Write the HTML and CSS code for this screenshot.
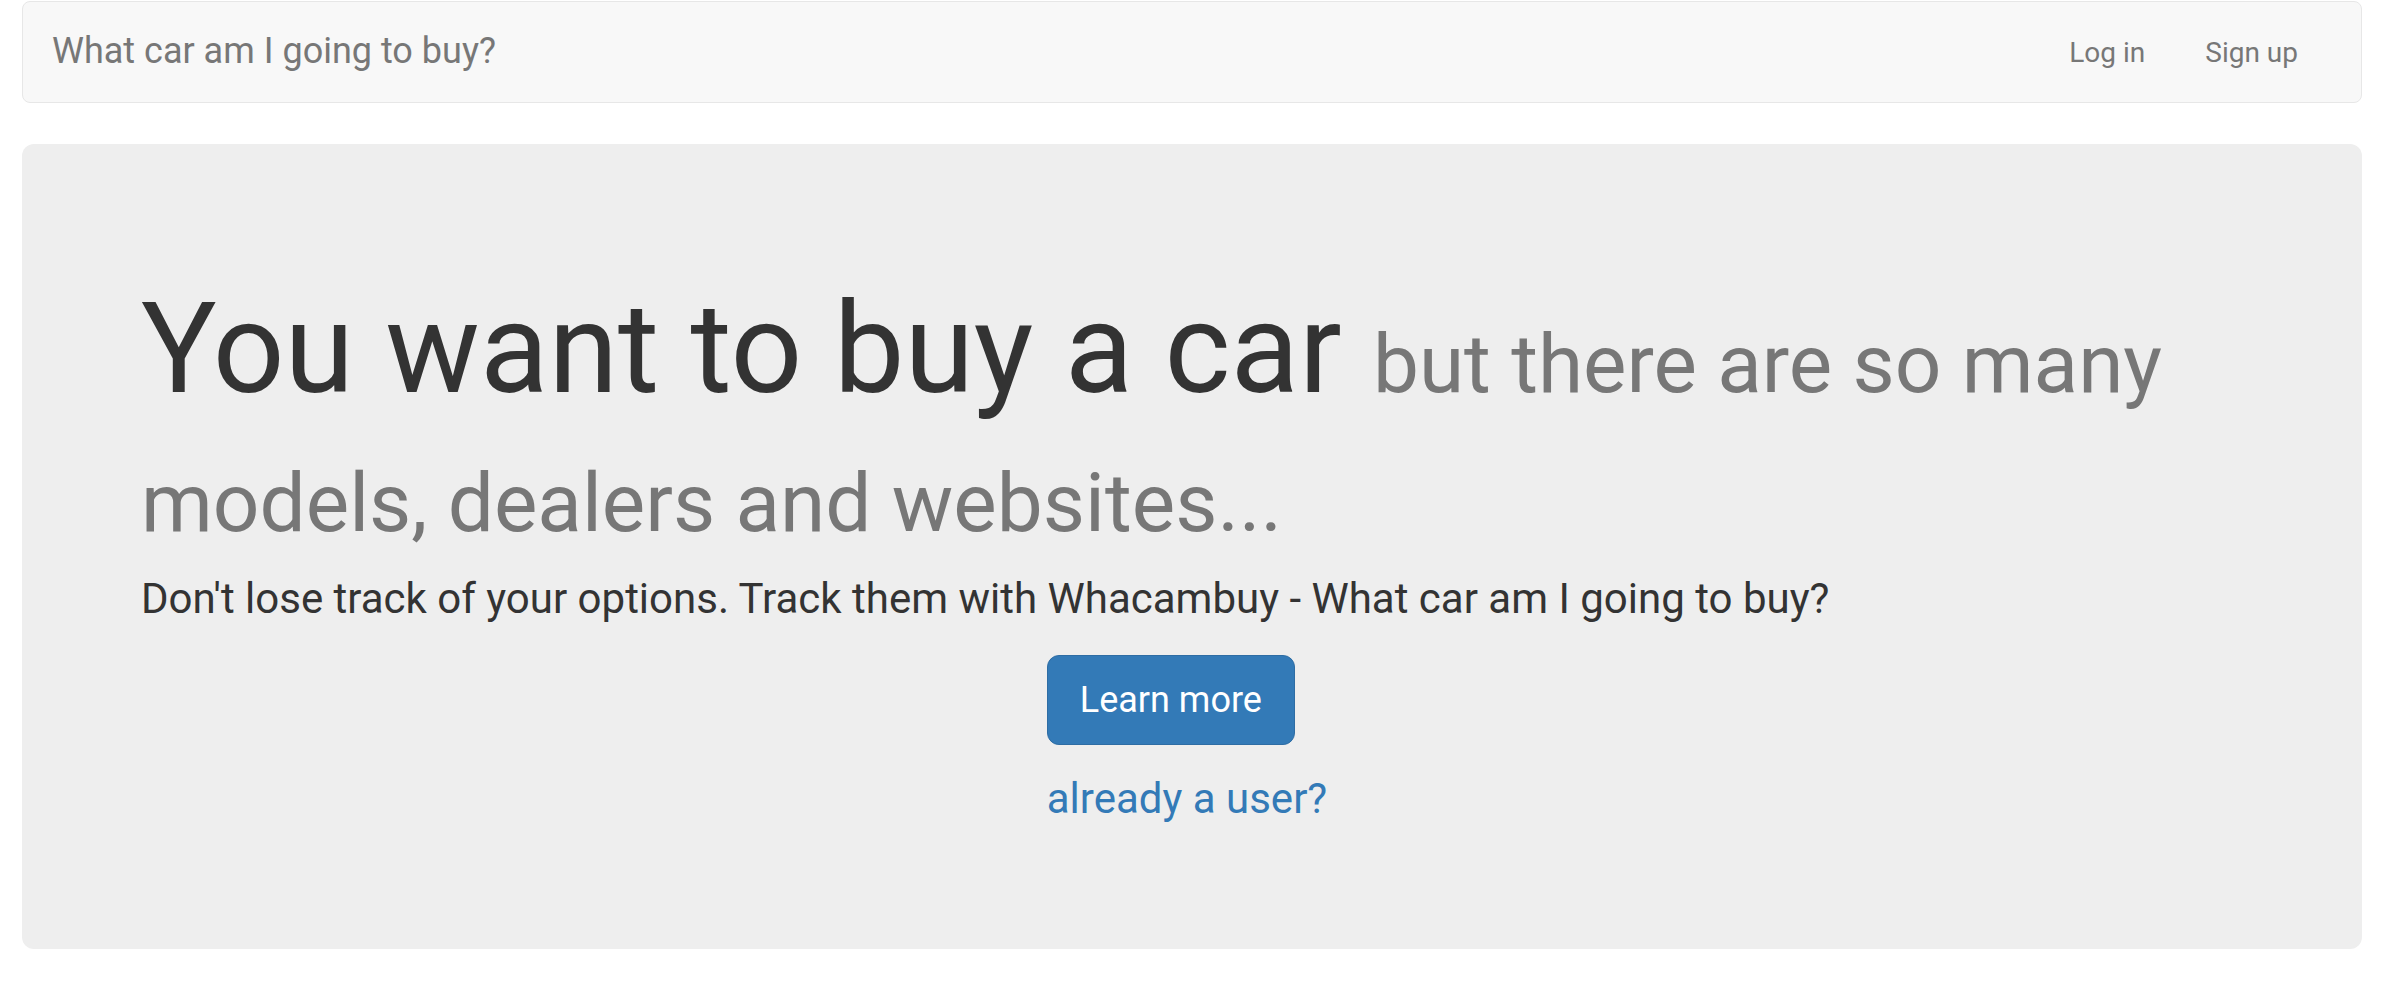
FILE: index.html
```html
<!DOCTYPE html>
<html lang="en">
<head>
<meta charset="utf-8">
<title>What car am I going to buy?</title>
<link rel="stylesheet" href="styles.css">
</head>
<body>
<div class="page">
  <nav class="navbar">
    <a class="brand" href="#">What car am I going to buy?</a>
    <ul class="nav-links">
      <li><a href="#">Log in</a></li>
      <li><a href="#">Sign up</a></li>
    </ul>
  </nav>
  <section class="jumbotron">
    <h1 class="headline">You want to buy a car <small class="headline-sub">but there are so many models, dealers and websites...</small></h1>
    <p class="lead">Don't lose track of your options. Track them with Whacambuy - What car am I going to buy?</p>
    <div class="cta-row">
      <div class="cta">
        <a class="btn-primary" href="#">Learn more</a>
        <p class="user-link"><a href="#">already a user?</a></p>
      </div>
    </div>
  </section>
</div>
</body>
</html>
```

FILE: styles.css
```css
* { box-sizing: border-box; }

html, body {
  margin: 0;
  padding: 0;
  background: #fff;
}

body {
  font-family: Roboto, "Liberation Sans", Arial, sans-serif;
  color: #333;
  font-size: 28px;
  line-height: 1.42857;
}

.page {
  padding: 1px 20px 0 22px;
}

.navbar {
  display: flex;
  justify-content: space-between;
  align-items: flex-start;
  height: 102px;
  background: #f8f8f8;
  border: 1px solid #e7e7e7;
  border-radius: 8px;
  margin-bottom: 41px;
  padding: 0 33px 0 29px;
}

.brand {
  display: block;
  padding: 29px 0 31px;
  font-size: 36px;
  line-height: 40px;
  color: #777;
  text-decoration: none;
}

.nav-links {
  display: flex;
  list-style: none;
  margin: 0;
  padding: 0;
}

.nav-links a {
  display: block;
  padding: 31px 30px 29px;
  font-size: 28px;
  line-height: 40px;
  color: #777;
  text-decoration: none;
}

.jumbotron {
  background: #eee;
  border-radius: 12px;
  padding: 96px 122px 90px 119px;
}

.headline {
  margin: 40px 0 12px;
  font-size: 126px;
  font-weight: 400;
  line-height: 1.1;
  color: #333;
}

.headline-sub {
  font-size: 65%;
  font-weight: 400;
  color: #777;
}

.lead {
  margin: 0 0 26px;
  font-size: 42px;
  line-height: 1.42857;
  font-weight: 400;
  color: #333;
}

.cta-row {
  display: flex;
  justify-content: center;
}

.cta {
  display: flex;
  flex-direction: column;
  align-items: flex-start;
  margin-right: 7px;
}

.btn-primary {
  display: inline-block;
  padding: 20px 32px;
  font-size: 36px;
  line-height: 48px;
  color: #fff;
  background: #337ab7;
  border: 1px solid #2e6da4;
  border-radius: 12px;
  text-decoration: none;
}

.user-link {
  margin: 24px 0 30px;
  font-size: 42px;
  line-height: 60px;
}

.user-link a {
  color: #337ab7;
  text-decoration: none;
}
```
